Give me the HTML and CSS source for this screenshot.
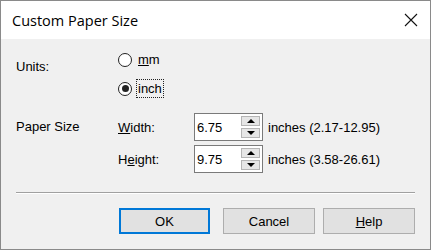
FILE: index.html
```html
<!DOCTYPE html>
<html lang="en">
<head>
    <meta charset="UTF-8">
    <title>Custom Paper Size</title>
    <link rel="stylesheet" href="styles.css">
</head>
<body>
    <div class="dialog">
        <div class="titlebar">
            <span class="title">Custom Paper Size</span>
            <svg class="close" width="14" height="14" viewBox="0 0 14 14">
                <path d="M1 1 L13 13 M13 1 L1 13" stroke="#111" stroke-width="1.1" fill="none"/>
            </svg>
        </div>
        <div class="content">
            <div class="row units">
                <div class="label">Units:</div>
                <div class="radios">
                    <label class="radio"><span class="dot"></span><span class="rtext"><u>m</u>m</span></label>
                    <label class="radio checked"><span class="dot"></span><span class="rtext focus">inch</span></label>
                </div>
            </div>
            <div class="row size">
                <div class="label">Paper Size</div>
                <div class="fields">
                    <div class="field">
                        <span class="flabel"><u>W</u>idth:</span>
                        <div class="spin">
                            <input class="box" type="text" value="6.75">
                            <div class="arrows">
                                <span class="arrow up"></span>
                                <span class="arrow down"></span>
                            </div>
                        </div>
                        <span class="range">inches (2.17-12.95)</span>
                    </div>
                    <div class="field">
                        <span class="flabel">H<u>e</u>ight:</span>
                        <div class="spin">
                            <input class="box" type="text" value="9.75">
                            <div class="arrows">
                                <span class="arrow up"></span>
                                <span class="arrow down"></span>
                            </div>
                        </div>
                        <span class="range">inches (3.58-26.61)</span>
                    </div>
                </div>
            </div>
            <div class="sep"></div>
            <div class="buttons">
                <button class="btn default">OK</button>
                <button class="btn cancel">Cancel</button>
                <button class="btn"><u>H</u>elp</button>
            </div>
        </div>
    </div>
</body>
</html>
```

FILE: styles.css
```css
body {
    margin: 0;
    background: #fff;
    font-family: "Liberation Sans", Arial, sans-serif;
    font-size: 13px;
    color: #000;
}
.dialog {
    width: 431px;
    height: 250px;
    box-sizing: border-box;
    border: 1px solid #8a8a8a;
    display: flex;
    flex-direction: column;
}
.titlebar {
    height: 38px;
    background: #fff;
    display: flex;
    align-items: center;
    justify-content: space-between;
    padding: 0 11px 0 11px;
}
.title {
    font-family: "Open Sans", sans-serif;
    font-size: 14.5px;
    color: #000;
}
.close {
    margin-right: 1px;
}
.content {
    flex: 1;
    background: #f0f0f0;
    padding: 0 15px 0 15px;
}
.row {
    display: flex;
}
.label {
    width: 102px;
}
.units {
    padding-top: 12px;
}
.units .label {
    padding-top: 8px;
}
.radios {
    display: flex;
    flex-direction: column;
    gap: 12px;
}
.radio {
    display: flex;
    align-items: center;
    height: 17px;
}
.dot {
    width: 12px;
    height: 12px;
    border: 1px solid #222;
    border-radius: 50%;
    background: #fff;
    display: flex;
    align-items: center;
    justify-content: center;
    margin-right: 4px;
}
.checked .dot::after {
    content: "";
    width: 7px;
    height: 7px;
    border-radius: 50%;
    background: #222;
}
.rtext {
    padding: 1px 1px;
    border: 1px dotted transparent;
}
.rtext.focus {
    border-color: #222;
}
.size {
    padding-top: 16px;
}
.size .label {
    padding-top: 6px;
}
.fields {
    display: flex;
    flex-direction: column;
    gap: 4px;
}
.field {
    display: flex;
    align-items: center;
}
.flabel {
    width: 76px;
}
.spin {
    display: flex;
    align-items: center;
    height: 28px;
    box-sizing: border-box;
    border: 1px solid #7a7a7a;
    background: #fff;
    width: 69px;
    margin-right: 5px;
}
.box {
    width: 42px;
    border: none;
    outline: none;
    padding: 0 0 0 2px;
    font: inherit;
    background: transparent;
}
.arrows {
    margin-left: auto;
    margin-right: 2px;
    display: flex;
    flex-direction: column;
    gap: 2px;
}
.arrow {
    width: 19px;
    height: 10px;
    box-sizing: border-box;
    background: #e6e6e6;
    border: 1px solid #b5b5b5;
    display: flex;
    align-items: center;
    justify-content: center;
}
.arrow::after {
    content: "";
    border-left: 4px solid transparent;
    border-right: 4px solid transparent;
}
.up::after {
    border-bottom: 4px solid #000;
}
.down::after {
    border-top: 4px solid #000;
}
.sep {
    margin-top: 19px;
    height: 1px;
    background: #a0a0a0;
    border-bottom: 1px solid #fff;
}
.buttons {
    display: flex;
    justify-content: flex-end;
    margin-top: 14px;
}
.btn {
    width: 92px;
    height: 26px;
    box-sizing: border-box;
    background: #e1e1e1;
    border: 1px solid #adadad;
    font: inherit;
    color: #000;
    padding: 0;
    margin-left: 8px;
}
.btn.default {
    border: 2px solid #0078d7;
    width: 91px;
}
.btn.cancel {
    margin-left: 13px;
}
```
